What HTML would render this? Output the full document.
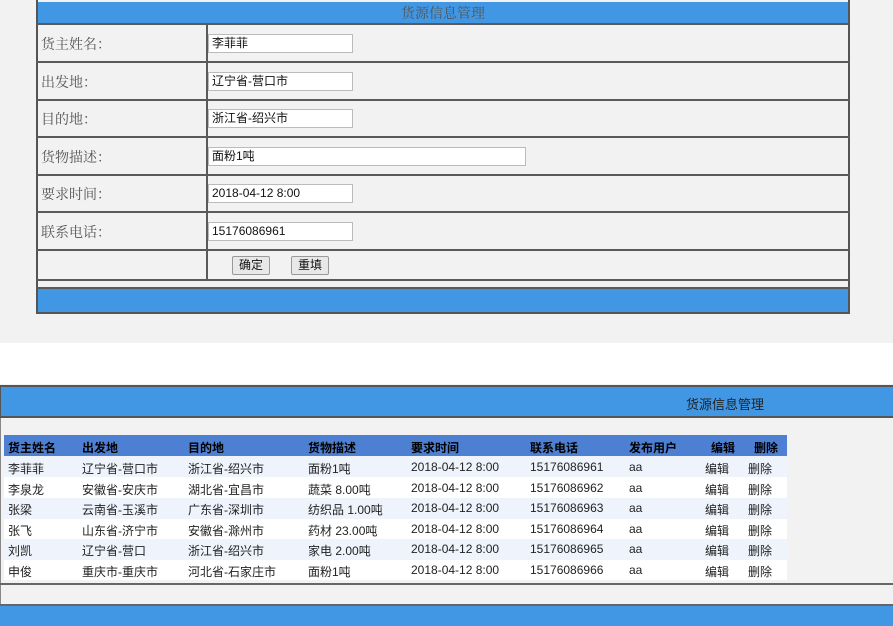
<!DOCTYPE html>
<html><head><meta charset="utf-8"><style>
*{margin:0;padding:0;box-sizing:border-box}
body{width:893px;height:626px;overflow:hidden;background:#fff;position:relative;font-family:"Liberation Sans","Noto Sans CJK SC",sans-serif}
.a{position:absolute}
.top{left:0;top:0;width:893px;height:343px;background:#f2f2f2}
.frm{left:36px;top:0;width:814px;height:314px;border:2px solid #555;border-top:none;background:#f2f2f2}
.hl{position:absolute;left:36px;width:814px;height:2px;background:#5a5a5a}
.lab{position:absolute;left:41px;font-family:"Liberation Serif","Noto Serif CJK SC",serif;font-size:14px;color:#555}
.inp{position:absolute;left:208px;height:19px;width:145px;background:#fff;border:1px solid #bbb;font-size:12px;line-height:17px;padding-left:3px;color:#111}
.btn{position:absolute;top:256px;width:38px;height:19px;background:#e8e8e8;border:1px solid #999;border-radius:2px;font-size:12px;line-height:17px;text-align:center;color:#111}
.t{position:absolute;font-size:12px;color:#222;white-space:nowrap}
.h{font-weight:bold;color:#000}
</style></head><body>
<div class="a top"></div>
<div class="a frm"></div>
<div class="a" style="left:38px;top:2px;width:810px;height:22px;background:#4197e3"></div>
<div class="a" style="left:38px;top:3px;width:810px;text-align:center;font-family:'Liberation Serif','Noto Serif CJK SC',serif;font-size:14px;color:#555">货源信息管理</div>
<div class="hl" style="top:23px"></div>
<div class="hl" style="top:61px"></div>
<div class="hl" style="top:99px"></div>
<div class="hl" style="top:136px"></div>
<div class="hl" style="top:174px"></div>
<div class="hl" style="top:211px"></div>
<div class="hl" style="top:249px"></div>
<div class="hl" style="top:279px"></div>
<div class="hl" style="top:287px"></div>
<div class="a" style="left:206px;top:24px;width:2px;height:256px;background:#5a5a5a"></div>
<div class="a" style="left:38px;top:289px;width:810px;height:23px;background:#4197e3"></div>
<div class="lab" style="top:34px">货主姓名：</div>
<div class="lab" style="top:72px">出发地：</div>
<div class="lab" style="top:109px">目的地：</div>
<div class="lab" style="top:147px">货物描述：</div>
<div class="lab" style="top:184px">要求时间：</div>
<div class="lab" style="top:222px">联系电话：</div>
<div class="inp" style="top:34px">李菲菲</div>
<div class="inp" style="top:72px">辽宁省-营口市</div>
<div class="inp" style="top:109px">浙江省-绍兴市</div>
<div class="inp" style="top:147px;width:318px">面粉1吨</div>
<div class="inp" style="top:184px">2018-04-12 8:00</div>
<div class="inp" style="top:222px">15176086961</div>
<div class="btn" style="left:232px">确定</div>
<div class="btn" style="left:291px">重填</div>

<div class="a" style="left:0;top:384px;width:893px;height:242px;background:#f2f2f2"></div>
<div class="a" style="left:0;top:385px;width:893px;height:33px;background:#4197e3;border-top:2px solid #555;border-bottom:2px solid #555;border-left:1px solid #555"></div>
<div class="a" style="left:686px;top:394px;font-size:13px;color:#222">货源信息管理</div>
<div class="a" style="left:0;top:418px;width:1px;height:190px;background:#888"></div>
<div class="a" style="left:4px;top:435px;width:783px;height:21px;background:#4d7fd2"></div>
<div class="a" style="left:4px;top:456px;width:783px;height:21px;background:#eef3fc"></div>
<div class="a" style="left:4px;top:477px;width:783px;height:21px;background:#fff"></div>
<div class="a" style="left:4px;top:498px;width:783px;height:21px;background:#eef3fc"></div>
<div class="a" style="left:4px;top:519px;width:783px;height:20px;background:#fff"></div>
<div class="a" style="left:4px;top:539px;width:783px;height:21px;background:#eef3fc"></div>
<div class="a" style="left:4px;top:560px;width:783px;height:20px;background:#fff"></div>
<div class="a" style="left:0;top:583px;width:893px;height:2px;background:#666"></div>
<div class="a" style="left:0;top:604px;width:893px;height:2px;background:#666"></div>
<div class="a" style="left:0;top:606px;width:893px;height:20px;background:#4197e3"></div>

<div class="t h" style="left:8px;top:439px">货主姓名</div>
<div class="t h" style="left:82px;top:439px">出发地</div>
<div class="t h" style="left:188px;top:439px">目的地</div>
<div class="t h" style="left:308px;top:439px">货物描述</div>
<div class="t h" style="left:411px;top:439px">要求时间</div>
<div class="t h" style="left:530px;top:439px">联系电话</div>
<div class="t h" style="left:629px;top:439px">发布用户</div>
<div class="t h" style="left:711px;top:439px">编辑</div>
<div class="t h" style="left:754px;top:439px">删除</div>

<div class="t" style="left:8px;top:460px">李菲菲</div><div class="t" style="left:82px;top:460px">辽宁省-营口市</div><div class="t" style="left:188px;top:460px">浙江省-绍兴市</div><div class="t" style="left:308px;top:460px">面粉1吨</div><div class="t" style="left:411px;top:460px">2018-04-12 8:00</div><div class="t" style="left:530px;top:460px">15176086961</div><div class="t" style="left:629px;top:460px">aa</div><div class="t" style="left:705px;top:460px">编辑</div><div class="t" style="left:748px;top:460px">删除</div>
<div class="t" style="left:8px;top:481px">李泉龙</div><div class="t" style="left:82px;top:481px">安徽省-安庆市</div><div class="t" style="left:188px;top:481px">湖北省-宜昌市</div><div class="t" style="left:308px;top:481px">蔬菜 8.00吨</div><div class="t" style="left:411px;top:481px">2018-04-12 8:00</div><div class="t" style="left:530px;top:481px">15176086962</div><div class="t" style="left:629px;top:481px">aa</div><div class="t" style="left:705px;top:481px">编辑</div><div class="t" style="left:748px;top:481px">删除</div>
<div class="t" style="left:8px;top:501px">张梁</div><div class="t" style="left:82px;top:501px">云南省-玉溪市</div><div class="t" style="left:188px;top:501px">广东省-深圳市</div><div class="t" style="left:308px;top:501px">纺织品 1.00吨</div><div class="t" style="left:411px;top:501px">2018-04-12 8:00</div><div class="t" style="left:530px;top:501px">15176086963</div><div class="t" style="left:629px;top:501px">aa</div><div class="t" style="left:705px;top:501px">编辑</div><div class="t" style="left:748px;top:501px">删除</div>
<div class="t" style="left:8px;top:522px">张飞</div><div class="t" style="left:82px;top:522px">山东省-济宁市</div><div class="t" style="left:188px;top:522px">安徽省-滁州市</div><div class="t" style="left:308px;top:522px">药材 23.00吨</div><div class="t" style="left:411px;top:522px">2018-04-12 8:00</div><div class="t" style="left:530px;top:522px">15176086964</div><div class="t" style="left:629px;top:522px">aa</div><div class="t" style="left:705px;top:522px">编辑</div><div class="t" style="left:748px;top:522px">删除</div>
<div class="t" style="left:8px;top:542px">刘凯</div><div class="t" style="left:82px;top:542px">辽宁省-营口</div><div class="t" style="left:188px;top:542px">浙江省-绍兴市</div><div class="t" style="left:308px;top:542px">家电 2.00吨</div><div class="t" style="left:411px;top:542px">2018-04-12 8:00</div><div class="t" style="left:530px;top:542px">15176086965</div><div class="t" style="left:629px;top:542px">aa</div><div class="t" style="left:705px;top:542px">编辑</div><div class="t" style="left:748px;top:542px">删除</div>
<div class="t" style="left:8px;top:563px">申俊</div><div class="t" style="left:82px;top:563px">重庆市-重庆市</div><div class="t" style="left:188px;top:563px">河北省-石家庄市</div><div class="t" style="left:308px;top:563px">面粉1吨</div><div class="t" style="left:411px;top:563px">2018-04-12 8:00</div><div class="t" style="left:530px;top:563px">15176086966</div><div class="t" style="left:629px;top:563px">aa</div><div class="t" style="left:705px;top:563px">编辑</div><div class="t" style="left:748px;top:563px">删除</div>
</body></html>
